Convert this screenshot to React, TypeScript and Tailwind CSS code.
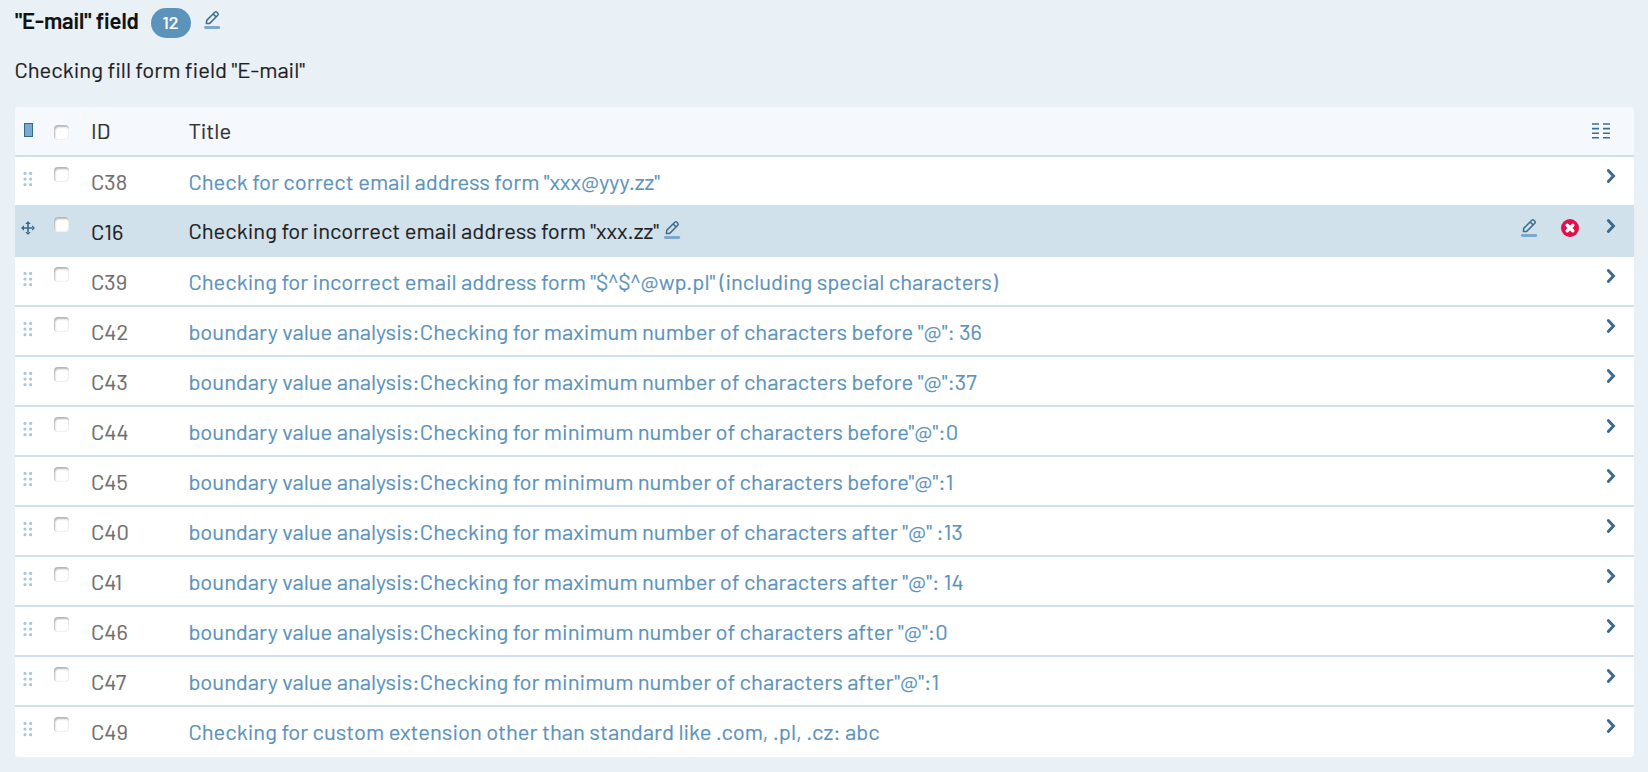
import React from "react";

type Row = { id: string; title: string; active?: boolean };

const rows: Row[] = [
  { id: "C38", title: 'Check for correct email address form "xxx@yyy.zz"' },
  { id: "C16", title: 'Checking for incorrect email address form "xxx.zz"', active: true },
  { id: "C39", title: 'Checking for incorrect email address form "$^$^@wp.pl" (including special characters)' },
  { id: "C42", title: 'boundary value analysis:Checking for maximum number of characters before "@": 36' },
  { id: "C43", title: 'boundary value analysis:Checking for maximum number of characters before "@":37' },
  { id: "C44", title: 'boundary value analysis:Checking for minimum number of characters before"@":0' },
  { id: "C45", title: 'boundary value analysis:Checking for minimum number of characters before"@":1' },
  { id: "C40", title: 'boundary value analysis:Checking for maximum number of characters after "@" :13' },
  { id: "C41", title: 'boundary value analysis:Checking for maximum number of characters after "@": 14' },
  { id: "C46", title: 'boundary value analysis:Checking for minimum number of characters after "@":0' },
  { id: "C47", title: 'boundary value analysis:Checking for minimum number of characters after"@":1' },
  { id: "C49", title: "Checking for custom extension other than standard like .com, .pl, .cz: abc" },
];

function Pencil({ className = "" }: { className?: string }) {
  return (
    <svg width="18" height="20" viewBox="0 0 18 20" fill="none" className={`shrink-0 ${className}`}>
      <path d="M3.4 13.6 3.7 10.4 11.8 2.3a1.5 1.5 0 0 1 2.1 0l.9.9a1.5 1.5 0 0 1 0 2.1l-8.1 8.1-3.3.2ZM10.2 4l2.9 2.9" stroke="#3f6d8e" strokeWidth="1.5" strokeLinejoin="round" />
      <path d="M2.4 17.5h13.4" stroke="#7ba9cc" strokeWidth="2.8" strokeLinecap="round" />
    </svg>
  );
}

function Checkbox() {
  return <span className="block size-[15px] shrink-0 rounded-[4px] bg-white shadow-[inset_1px_2px_2px_#b4b4b4,inset_-1px_-1px_1px_#f0f0f0]" />;
}

function Dots() {
  return (
    <svg width="10" height="16" viewBox="0 0 10 16" fill="#a9c7dd" className="shrink-0">
      {[2, 7.6].map((x) => [2.4, 8.1, 13.7].map((y) => <circle key={`${x}-${y}`} cx={x} cy={y} r="1.6" />))}
    </svg>
  );
}

function Move() {
  return (
    <svg width="14" height="14" viewBox="0 0 14 14" fill="#34698d" className="shrink-0">
      <path d="M6.2 2.5h1.6v9H6.2zM2.5 6.2h9v1.6h-9zM7 0l2.7 3H4.3zM7 14l2.7-3H4.3zM0 7l3-2.7v5.4zM14 7l-3-2.7v5.4z" />
    </svg>
  );
}

function Chevron() {
  return (
    <svg width="10" height="16" viewBox="0 0 10 16" fill="none" className="shrink-0">
      <path d="m2.3 2.5 5.2 5.5-5.2 5.5" stroke="#3b6a8d" strokeWidth="2.9" strokeLinecap="round" strokeLinejoin="miter" />
    </svg>
  );
}

export default function App() {
  return (
    <main className="flex h-[772px] w-[1648px] flex-col overflow-hidden bg-[#e9f0f6] pl-[15px] font-['Barlow','Roboto',sans-serif] text-[22px] leading-[26px] text-[#1f1f1f] [-webkit-text-stroke:0.2px]">
      <header className="flex h-[46px] items-start pt-2">
        <h1 className="-mt-px w-[136px] font-semibold tracking-[-0.05px] whitespace-nowrap text-[#111]">"E-mail" field</h1>
        <span className="flex h-[30px] w-10 items-center justify-center rounded-full bg-[#5b93bb] pr-px pb-0.5 text-[18px] font-medium text-white">12</span>
        <Pencil className="mt-0.5 ml-3" />
      </header>
      <p className="-ml-[0.5px] h-[61px] pt-2.5 whitespace-nowrap">Checking fill form field "E-mail"</p>
      <section className="w-[1619px] overflow-hidden rounded-[4px] bg-white">
        <div className="flex h-[50px] items-start border-b-2 border-[#d1e1eb] bg-[#f5f8fd] text-[#333]">
          <span className="mt-4 ml-[9px] h-3.5 w-[9px] border border-[#34698d] bg-[#7ba9cc]" />
          <div className="mt-[18px] ml-[21px]"><Checkbox /></div>
          <span className="mt-2.5 ml-[22px] w-[97.5px]">ID</span>
          <span className="mt-2.5 flex-1">Title</span>
          <svg width="18" height="16" viewBox="0 0 18 16" className="mt-4 mr-6 shrink-0" stroke="#3f6d8e" strokeWidth="1.6">
            {[1, 5.6, 10.2, 14.8].map((y) => <path key={y} d={`M0 ${y}h7M11 ${y}h7`} />)}
          </svg>
        </div>
        {rows.map((row) => (
          <div key={row.id} className={`flex h-[50px] items-start border-b-2 last:border-white ${row.active ? "border-[#d1e1eb] bg-[#d1e1eb] text-[#222]" : "border-[#d1e1eb] text-[#6f6f6f]"}`}>
            <div className="flex w-[39px] pl-2">
              {row.active ? <div className="mt-3.5 -ml-[2.5px]"><Move /></div> : <div className="mt-3.5"><Dots /></div>}
            </div>
            <div className="mt-2.5"><Checkbox /></div>
            <span className="mt-[11px] ml-[22px] w-[97.5px]">{row.id}</span>
            <div className={`flex flex-1 items-start ${row.active ? "mt-2.5 text-[#1f1f1f]" : "mt-[11px] text-[#5b93bb]"}`}>
              <span className="whitespace-nowrap">{row.title}</span>
              {row.active && <Pencil className="mt-[3px] ml-[3.5px]" />}
            </div>
            {row.active && (
              <div className="mt-[11px] mr-[27px] flex items-start gap-[23px]">
                <Pencil />
                <svg width="18" height="18" viewBox="0 0 18 18" className="mt-px">
                  <circle cx="9" cy="9" r="9" fill="#e20f4b" />
                  <path d="m6.2 6.2 5.6 5.6m0-5.6-5.6 5.6" stroke="white" strokeWidth="3.4" strokeLinecap="round" />
                </svg>
              </div>
            )}
            <div className="mt-[11px] mr-[18px]"><Chevron /></div>
          </div>
        ))}
      </section>
    </main>
  );
}
